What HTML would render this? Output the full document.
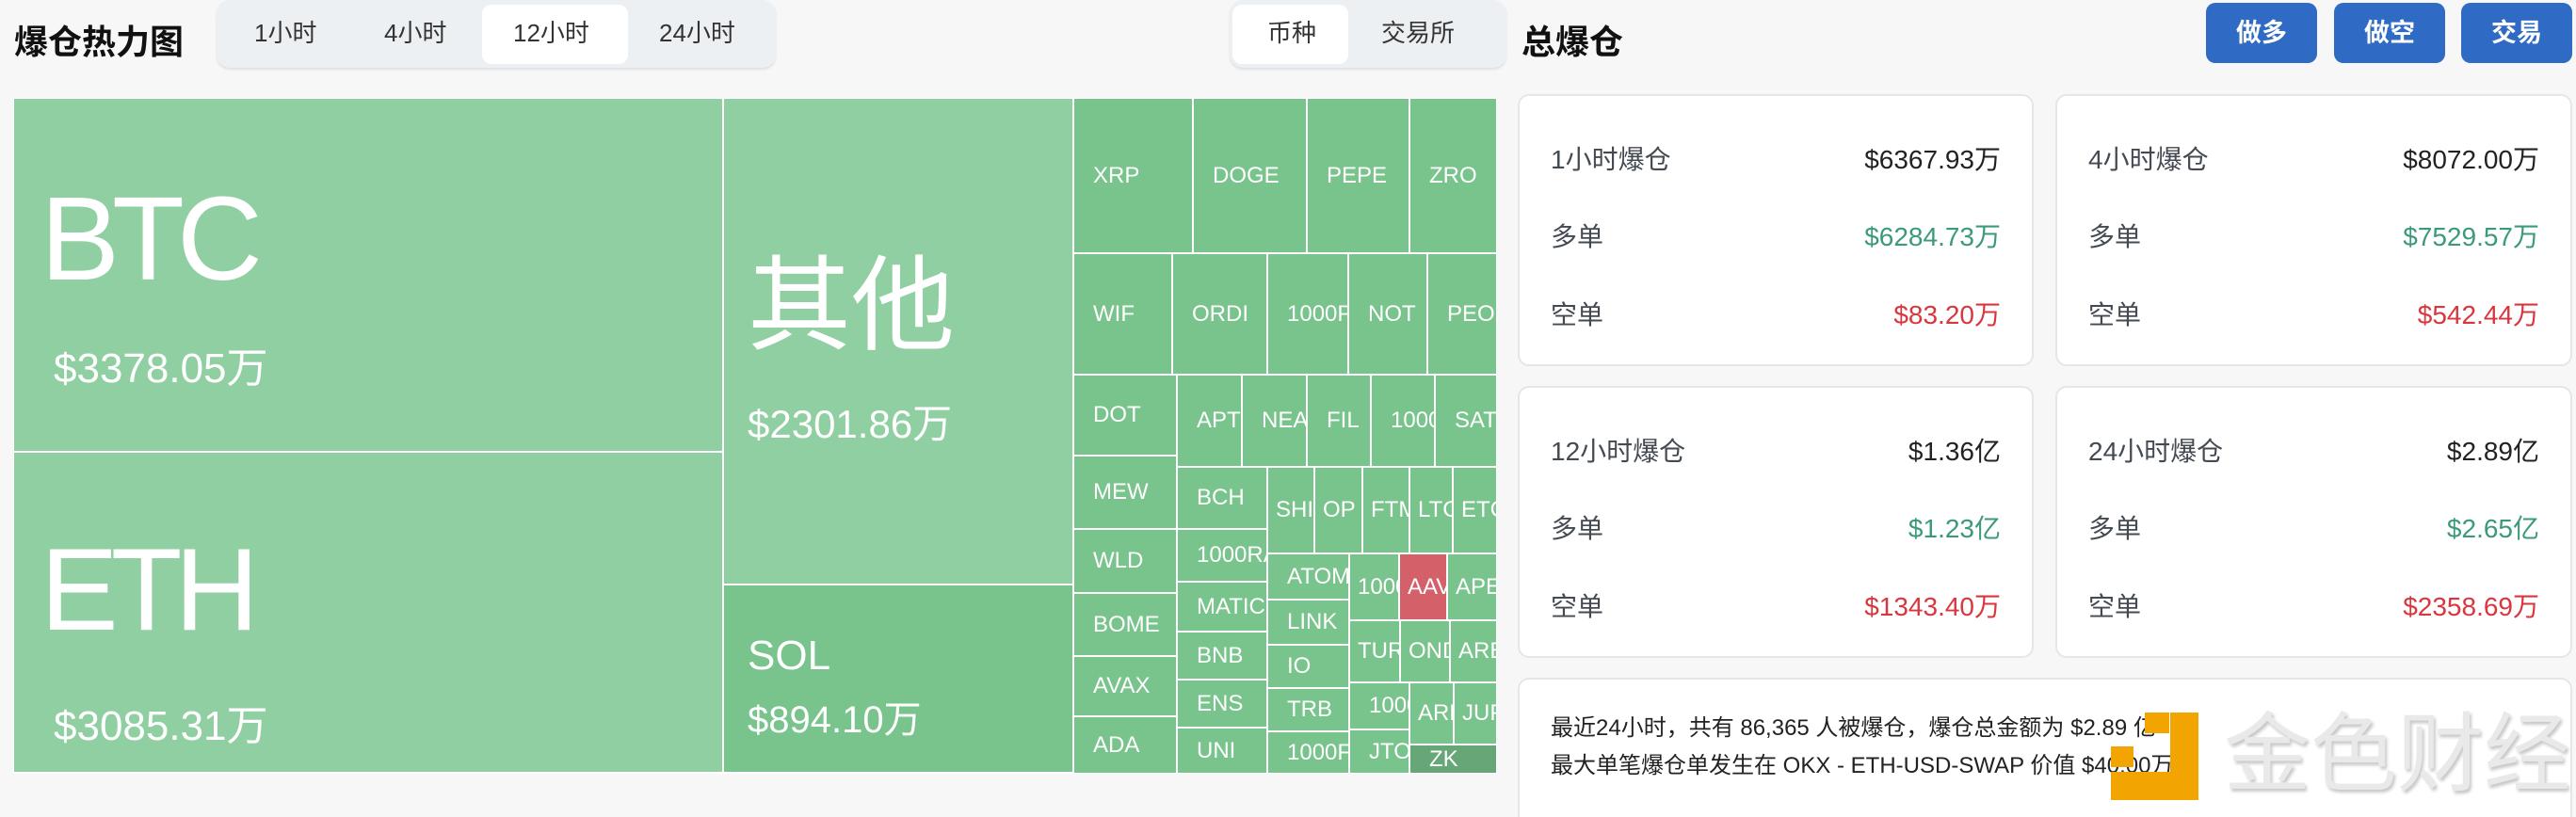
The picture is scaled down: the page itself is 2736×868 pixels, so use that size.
<!DOCTYPE html>
<html><head><meta charset="utf-8">
<style>
*{margin:0;padding:0;box-sizing:border-box}
html{width:2736px;height:868px;overflow:hidden}
body{width:2736px;height:868px;background:#f7f7f7;font-family:"Liberation Sans","Noto Sans CJK SC",sans-serif;position:relative;overflow:hidden;color:#1f2329}
.a{position:absolute;white-space:nowrap}
.title{font-size:36px;font-weight:bold;color:#111}
.tabs{background:#edf0f3;border-radius:14px;box-shadow:0 2px 2px #dde0e4}
.tab{position:absolute;font-size:26px;color:#333;top:0;height:70px;line-height:70px}
.act{background:#fff;border-radius:10px}
.tm{position:absolute;left:14px;top:104px;width:1576px;height:718px;background:#fff}
.t{position:absolute;background:#79c48c;color:#fff;font-size:24px;white-space:nowrap;overflow:hidden;display:flex;align-items:center;padding-left:20px}
.big{position:absolute;background:#90cfa1;color:#fff}
.btn{position:absolute;top:3px;height:64px;width:118px;background:#2f6bc4;border-radius:10px;color:#fff;font-size:27px;font-weight:bold;text-align:center;line-height:64px}
.card{position:absolute;background:#fff;border:2px solid #e6e6e6;border-radius:12px}
.row{position:absolute;left:33px;right:33px;font-size:28px;display:flex;justify-content:space-between;color:#444a52;line-height:34px}
.row b{font-weight:normal;color:#222}
.g{color:#3a9a7a!important}.r{color:#d9363e!important}
</style></head><body>
<div class="a title" style="left:15px;top:16px">爆仓热力图</div>
<div class="a tabs" style="left:230px;top:0;width:594px;height:72px">
 <div class="tab act" style="left:282px;top:5px;width:155px;height:63px"></div>
 <div class="tab" style="left:40px">1小时</div>
 <div class="tab" style="left:178px">4小时</div>
 <div class="tab" style="left:315px">12小时</div>
 <div class="tab" style="left:470px">24小时</div>
</div>
<div class="a tabs" style="left:1306px;top:0;width:294px;height:72px">
 <div class="tab act" style="left:3px;top:5px;width:123px;height:63px"></div>
 <div class="tab" style="left:40px">币种</div>
 <div class="tab" style="left:161px">交易所</div>
</div>

<div class="tm">
 <div class="big" style="left:1px;top:1px;width:752px;height:374px">
  <div class="a" style="left:28px;top:86px;font-size:126px;line-height:126px;letter-spacing:-8px">BTC</div>
  <div class="a" style="left:42px;top:262px;font-size:44px;line-height:50px">$3378.05万</div>
 </div>
 <div class="big" style="left:1px;top:377px;width:752px;height:339px">
  <div class="a" style="left:28px;top:84px;font-size:124px;line-height:124px;letter-spacing:-8px">ETH</div>
  <div class="a" style="left:42px;top:266px;font-size:44px;line-height:50px">$3085.31万</div>
 </div>
 <div class="big" style="left:755px;top:1px;width:370px;height:515px">
  <div class="a" style="left:25px;top:156px;font-size:110px;line-height:130px">其他</div>
  <div class="a" style="left:25px;top:321px;font-size:42px;line-height:50px">$2301.86万</div>
 </div>
 <div class="big" style="left:755px;top:518px;width:370px;height:198px;background:#79c48c">
  <div class="a" style="left:25px;top:50px;font-size:44px;line-height:50px">SOL</div>
  <div class="a" style="left:25px;top:118px;font-size:40px;line-height:50px">$894.10万</div>
 </div>
</div>
<div id="sm"></div>
<script>
var T=[["XRP",1141,105,1266,268],["DOGE",1268,105,1387,268],["PEPE",1389,105,1496,268],["ZRO",1498,105,1589,268],
["WIF",1141,270,1244,397],["ORDI",1246,270,1345,397],["1000PEPE",1347,270,1431,397],["NOT",1433,270,1515,397],["PEOPLE",1517,270,1589,397],
["DOT",1141,399,1249,483],["MEW",1141,485,1249,561],["WLD",1141,563,1249,629],["BOME",1141,631,1249,696],["AVAX",1141,698,1249,760],["ADA",1141,762,1249,821],
["APT",1251,399,1318,495],["NEAR",1320,399,1387,495],["FIL",1389,399,1455,495],["1000BONK",1457,399,1523,495],["SATS",1525,399,1589,495],
["BCH",1251,497,1345,561],["1000RATS",1251,563,1345,617],["MATIC",1251,619,1345,670],["BNB",1251,672,1345,721],["ENS",1251,723,1345,772],["UNI",1251,774,1345,821],
["SHIB",1347,497,1395,587],["OP",1397,497,1446,587],["FTM",1448,497,1496,587],["LTC",1498,497,1542,587],["ETC",1544,497,1589,587],
["ATOM",1347,589,1432,636],["LINK",1347,638,1432,684],["IO",1347,686,1432,730],["TRB",1347,732,1432,776],["1000FLOKI",1347,778,1432,821],
["1000SHIB",1434,589,1485,658],["AAVE",1487,589,1536,658,"#d4606a"],["APE",1538,589,1589,658],
["TURBO",1434,660,1486,724],["ONDO",1488,660,1539,724],["ARB",1541,660,1589,724],
["1000LUNC",1434,726,1496,774],["JTO",1434,776,1496,821],["ARKM",1498,726,1543,790],["JUP",1545,726,1589,790],["ZK",1498,792,1589,821,"#66a677"]];
var h="";T.forEach(function(t){var w=t[3]-t[1],hh=t[4]-t[2];var pl=w<60?8:20;h+='<div class="t" style="left:'+t[1]+'px;top:'+t[2]+'px;width:'+w+'px;height:'+hh+'px;padding-left:'+pl+'px'+(t[5]?';background:'+t[5]:'')+'">'+t[0]+'</div>';});
document.getElementById("sm").innerHTML=h;
</script>

<div class="a title" style="left:1616px;top:16px">总爆仓</div>
<div class="btn" style="left:2343px">做多</div>
<div class="btn" style="left:2479px">做空</div>
<div class="btn" style="left:2614px">交易</div>

<div class="card" style="left:1612px;top:100px;width:548px;height:289px">
 <div class="row" style="top:51px"><span>1小时爆仓</span><b>$6367.93万</b></div>
 <div class="row" style="top:133px"><span>多单</span><b class="g">$6284.73万</b></div>
 <div class="row" style="top:216px"><span>空单</span><b class="r">$83.20万</b></div>
</div>
<div class="card" style="left:2183px;top:100px;width:549px;height:289px">
 <div class="row" style="top:51px"><span>4小时爆仓</span><b>$8072.00万</b></div>
 <div class="row" style="top:133px"><span>多单</span><b class="g">$7529.57万</b></div>
 <div class="row" style="top:216px"><span>空单</span><b class="r">$542.44万</b></div>
</div>
<div class="card" style="left:1612px;top:410px;width:548px;height:289px">
 <div class="row" style="top:51px"><span>12小时爆仓</span><b>$1.36亿</b></div>
 <div class="row" style="top:133px"><span>多单</span><b class="g">$1.23亿</b></div>
 <div class="row" style="top:216px"><span>空单</span><b class="r">$1343.40万</b></div>
</div>
<div class="card" style="left:2183px;top:410px;width:549px;height:289px">
 <div class="row" style="top:51px"><span>24小时爆仓</span><b>$2.89亿</b></div>
 <div class="row" style="top:133px"><span>多单</span><b class="g">$2.65亿</b></div>
 <div class="row" style="top:216px"><span>空单</span><b class="r">$2358.69万</b></div>
</div>
<div class="card" style="left:1612px;top:720px;width:1120px;height:160px">
 <div class="a" style="left:33px;top:32px;font-size:24px;line-height:40px;color:#222">最近24小时，共有 86,365 人被爆仓，爆仓总金额为 $2.89 亿<br>最大单笔爆仓单发生在 OKX - ETH-USD-SWAP 价值 $40.00万</div>
</div>

<div class="a" style="left:2242px;top:820px;width:93px;height:30px;background:#f2a500"></div>
<div class="a" style="left:2305px;top:757px;width:30px;height:93px;background:#f2a500"></div>
<div class="a" style="left:2278px;top:757px;width:26px;height:22px;background:#f2a500"></div>
<div class="a" style="left:2242px;top:793px;width:24px;height:22px;background:#f2a500"></div>
<div class="a" style="left:2362px;top:752px;font-size:92px;line-height:100px;color:#e9e9e9;text-shadow:2px 3px 3px #c8c8c8">金色财经</div>
</body></html>
